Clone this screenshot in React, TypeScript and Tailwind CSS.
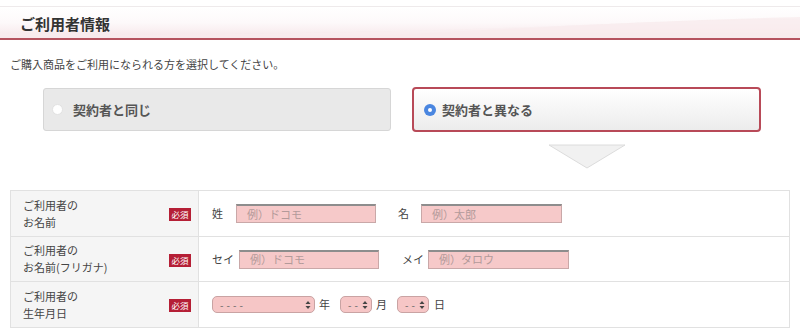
const font = { fontFamily: '"Noto Sans CJK JP", "Noto Sans", sans-serif' }

function Badge() {
  return (
    <span className="ml-auto mr-[7px] mt-[2px] flex h-[13px] w-[22px] items-center justify-center bg-[#b51f36] text-[8.5px] leading-none text-white">
      必須
    </span>
  )
}

function TextBox({ placeholder, width }: { placeholder: string; width: string }) {
  return (
    <div
      className={`flex h-[19px] items-center border border-[#c9a8a8] border-t-[#8d8d8d] border-t-2 bg-[#f6c9c9] pl-[10px] text-[11px] text-[#b39a9a] ${width}`}
    >
      {placeholder}
    </div>
  )
}

function Select({ label, width }: { label: string; width: string }) {
  return (
    <div
      className={`flex h-[17px] items-center justify-between whitespace-nowrap rounded-[5px] border border-[#c9a3a3] bg-[#f6c6c6] pl-[7px] pr-[3px] text-[10px] tracking-[3px] text-[#666] ${width}`}
    >
      <span>{label}</span>
      <svg width="6" height="10" viewBox="0 0 6 10" className="shrink-0">
        <path d="M3 1 L5.5 4 H0.5 Z" fill="#444" />
        <path d="M3 9 L5.5 6 H0.5 Z" fill="#444" />
      </svg>
    </div>
  )
}

function Row({ l1, l2, children, h }: { l1: string; l2: string; children: React.ReactNode; h: string }) {
  return (
    <div className={`flex border-b border-[#e1e1e1] last:border-b-0 ${h}`}>
      <div className="flex w-[188px] shrink-0 items-center border-r border-[#e1e1e1] bg-[#f5f5f5] pl-[12px]">
        <div className="text-[11px] leading-[17px] text-[#444]">
          <div>{l1}</div>
          <div>{l2}</div>
        </div>
        <Badge />
      </div>
      <div className="flex flex-1 items-center pl-[13px] text-[11px] text-[#444]">{children}</div>
    </div>
  )
}

export default function App() {
  return (
    <div className="h-[335px] w-[800px] overflow-hidden bg-white text-[#333]" style={font}>
      <div className="mt-[6px] border-t border-[#eeeaeb]" />
      <div className="relative h-[33px] overflow-hidden border-b-2 border-[#b5535f] bg-gradient-to-b from-white via-[#fdf9fa] to-[#f6e6e9]">
        <svg className="absolute inset-0" width="800" height="33" viewBox="0 0 800 33" preserveAspectRatio="none">
          <path d="M300 33 C 500 22, 650 14, 800 10 L800 33 Z" fill="#f7e7ea" opacity="0.6" />
          <path d="M0 26 C 200 30, 400 25, 560 19 C 650 15, 720 13, 800 12 L800 33 L0 33 Z" fill="#f9edf0" opacity="0.5" />
        </svg>
        <h2 className="relative pl-[20px] text-[15px] font-bold leading-[33px] text-[#333]">ご利用者情報</h2>
      </div>

      <p className="mt-[16px] pl-[10px] text-[11px] leading-[16px] text-[#444]">
        ご購入商品をご利用になられる方を選択してください。
      </p>

      <div className="mt-[15px] flex items-start gap-[21px] pl-[43px]">
        <div className="mt-[1px] flex h-[43px] w-[348px] items-center rounded-[3px] border border-[#d6d6d6] bg-[#e9e9e9] pl-[8px]">
          <span className="h-[11px] w-[11px] rounded-full border border-[#e2e2e2] bg-white" />
          <span className="ml-[10px] text-[13px] font-bold text-[#555]">契約者と同じ</span>
        </div>
        <div className="flex flex-col items-center">
          <div className="flex h-[45px] w-[349px] items-center self-stretch rounded-[4px] border-2 border-[#b84a58] bg-gradient-to-b from-white to-[#ececec] pl-[10px]">
            <span className="flex h-[12px] w-[12px] items-center justify-center rounded-full bg-[#4a86e0]">
              <span className="h-[4px] w-[4px] rounded-full bg-white" />
            </span>
            <span className="ml-[6px] text-[13px] font-bold text-[#555]">契約者と異なる</span>
          </div>
          <svg className="mt-[12px]" width="78" height="25" viewBox="0 0 78 25">
            <path d="M1 1 H77 L39 24 Z" fill="#f1f1f1" stroke="#dcdcdc" strokeWidth="1" />
          </svg>
        </div>
      </div>

      <div className="mx-[10px] mt-[21px] border border-[#e1e1e1]">
        <Row l1="ご利用者の" l2="お名前" h="h-[46px]">
          <span className="w-[24px]">姓</span>
          <TextBox placeholder="例）ドコモ" width="w-[140px]" />
          <span className="ml-[22px] w-[23px]">名</span>
          <TextBox placeholder="例）太郎" width="w-[141px]" />
        </Row>
        <Row l1="ご利用者の" l2="お名前(フリガナ)" h="h-[45px]">
          <span className="w-[27px]">セイ</span>
          <TextBox placeholder="例）ドコモ" width="w-[140px]" />
          <span className="ml-[23px] w-[26px]">メイ</span>
          <TextBox placeholder="例）タロウ" width="w-[141px]" />
        </Row>
        <Row l1="ご利用者の" l2="生年月日" h="h-[45px]">
          <Select label="----" width="w-[103px]" />
          <span className="ml-[4px]">年</span>
          <Select label="--" width="w-[32px] ml-[10px]" />
          <span className="ml-[4px]">月</span>
          <Select label="--" width="w-[32px] ml-[10px]" />
          <span className="ml-[5px]">日</span>
        </Row>
      </div>
    </div>
  )
}
